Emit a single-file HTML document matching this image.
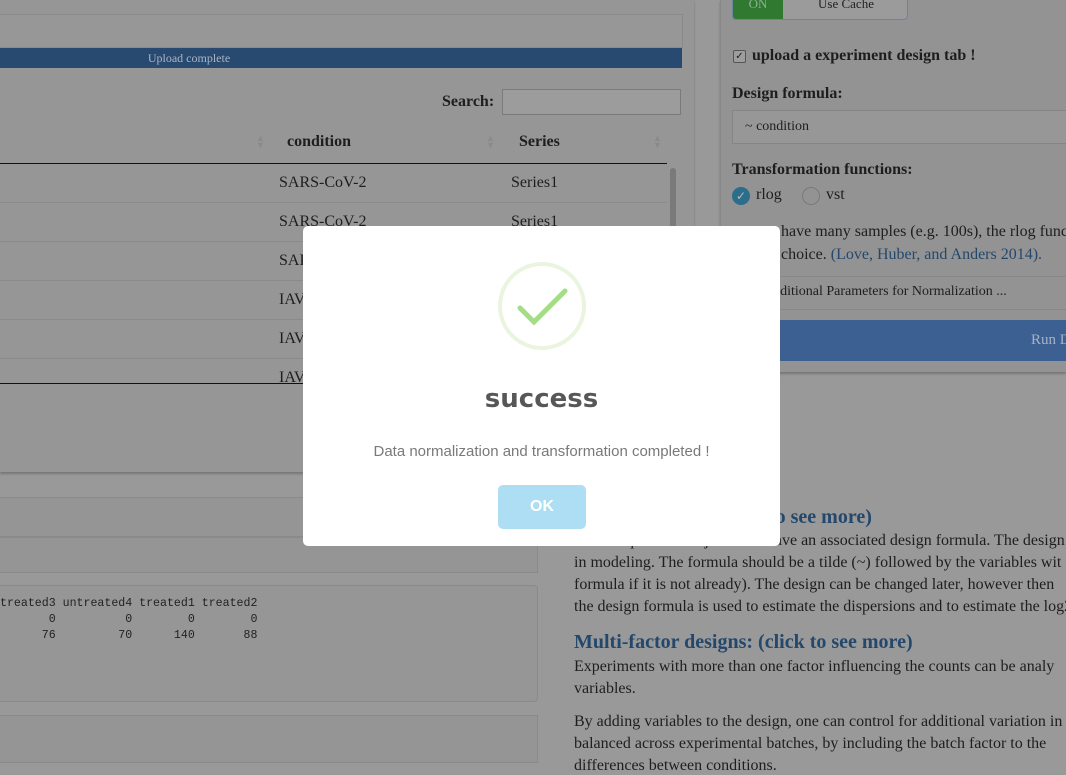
<!DOCTYPE html>
<html><head><meta charset="utf-8"><style>
*{margin:0;padding:0;box-sizing:border-box}
body{width:1066px;height:763px;overflow:hidden;background:#999;font-family:"Liberation Serif",serif;color:#1e1e1e;position:relative}
.a{position:absolute;white-space:nowrap}
.b{font-weight:bold}
.mono{font-family:"Liberation Mono",monospace;font-size:11.6px}
.link{color:#24486b}
</style></head><body>
<div class="a" style="left:0;top:0;width:694px;height:472px;background:#969696;box-shadow:0 2px 2px #777"></div>
<div class="a" style="left:0;top:14px;width:683px;height:34px;border:1px solid #8a8a8a;border-left:none;background:#979797"></div>
<div class="a" style="left:0;top:48px;width:682px;height:20px;background:#284a70;color:#a9b5c4;font-size:12px;text-align:center;line-height:20px;padding-right:304px">Upload complete</div>
<div class="a b" style="left:442px;top:93px;font-size:16px">Search:</div>
<div class="a" style="left:502px;top:89px;width:179px;height:26px;border:1px solid #7a7a7a;background:#9c9c9c"></div>
<div class="a b" style="left:287px;top:133px;font-size:16px">condition</div>
<div class="a b" style="left:519px;top:133px;font-size:16px">Series</div>
<div class="a" style="left:256px;top:135px;color:#8a8a8a;font-size:9px;line-height:7px">▲<br>▼</div>
<div class="a" style="left:486px;top:135px;color:#8a8a8a;font-size:9px;line-height:7px">▲<br>▼</div>
<div class="a" style="left:653px;top:135px;color:#8a8a8a;font-size:9px;line-height:7px">▲<br>▼</div>
<div class="a" style="left:0;top:163px;width:667px;height:1px;background:#111"></div>
<div class="a" style="left:0;top:202px;width:667px;height:1px;background:#8a8a8a"></div>
<div class="a" style="left:0;top:241px;width:667px;height:1px;background:#8a8a8a"></div>
<div class="a" style="left:0;top:280px;width:667px;height:1px;background:#8a8a8a"></div>
<div class="a" style="left:0;top:319px;width:667px;height:1px;background:#8a8a8a"></div>
<div class="a" style="left:0;top:358px;width:667px;height:1px;background:#8a8a8a"></div>
<div class="a" style="left:0;top:383px;width:667px;height:1px;background:#111"></div>
<div class="a" style="left:670px;top:168px;width:6px;height:70px;border-radius:3px;background:#7a7a7a"></div>
<div class="a" style="left:279px;top:174px;font-size:16px">SARS-CoV-2</div>
<div class="a" style="left:511px;top:174px;font-size:16px">Series1</div>
<div class="a" style="left:279px;top:213px;font-size:16px">SARS-CoV-2</div>
<div class="a" style="left:511px;top:213px;font-size:16px">Series1</div>
<div class="a" style="left:279px;top:252px;font-size:16px">SARS</div>
<div class="a" style="left:279px;top:291px;font-size:16px">IAV</div>
<div class="a" style="left:279px;top:330px;font-size:16px">IAV</div>
<div class="a" style="left:279px;top:369px;font-size:16px">IAV</div>
<div class="a" style="left:0;top:497px;width:538px;height:40px;border:1px solid #8a8a8a;border-left:none;background:#959595"></div>
<div class="a" style="left:0;top:537px;width:538px;height:36px;border:1px solid #8a8a8a;border-left:none;background:#959595"></div>
<div class="a" style="left:0;top:585px;width:538px;height:117px;border:1px solid #8a8a8a;border-left:none;border-radius:0 4px 4px 0;background:#969696"></div>
<div class="a mono" style="left:0;top:597px;color:#222">treated3 untreated4 treated1 treated2</div>
<div class="a mono" style="left:0;top:613px;color:#222;white-space:pre">       0          0        0        0</div>
<div class="a mono" style="left:0;top:629px;color:#222;white-space:pre">      76         70      140       88</div>
<div class="a" style="left:0;top:715px;width:538px;height:48px;border:1px solid #8a8a8a;border-left:none;background:#959595"></div>
<div class="a" style="left:720px;top:0;width:346px;height:372px;background:#939393;border-left:1px solid #888;box-shadow:0 2px 2px #777"></div>
<div class="a" style="left:732px;top:-4px;width:176px;height:24px;border:1px solid #6a84a4;border-radius:4px;background:#9b9b9b;overflow:hidden">
<div class="a" style="left:0;top:0;width:50px;height:24px;background:#2f7a30;color:#8fb08f;font-size:13px;text-align:center;line-height:14px">ON</div>
<div class="a" style="left:50px;top:0;width:126px;color:#222;font-size:13px;text-align:center;line-height:14px">Use Cache</div></div>
<div class="a" style="left:733px;top:50px;width:13px;height:13px;border:1px solid #555;border-radius:2px;background:#9d9d9d;font-size:10px;line-height:11px;text-align:center">✓</div>
<div class="a b" style="left:752px;top:47px;font-size:16px">upload a experiment design tab !</div>
<div class="a b" style="left:732px;top:85px;font-size:16px">Design formula:</div>
<div class="a" style="left:732px;top:110px;width:340px;height:34px;border:1px solid #858585;background:#979797;font-size:14px;line-height:32px;padding-left:12px">~ condition</div>
<div class="a b" style="left:732px;top:161px;font-size:16px">Transformation functions:</div>
<div class="a" style="left:732px;top:187px;width:18px;height:18px;border-radius:50%;background:#2b6e8c;color:#bbb;font-size:12px;text-align:center;line-height:18px">✓</div>
<div class="a" style="left:756px;top:186px;font-size:16px">rlog</div>
<div class="a" style="left:802px;top:187px;width:18px;height:18px;border-radius:50%;border:1px solid #7a7a7a"></div>
<div class="a" style="left:826px;top:186px;font-size:16px">vst</div>
<div class="a" style="left:781px;top:223px;font-size:16px">have many samples (e.g. 100s), the rlog func</div>
<div class="a" style="left:781px;top:246px;font-size:16px">choice. <span class="link">(Love, Huber, and Anders 2014).</span></div>
<div class="a" style="left:760px;top:276px;width:306px;height:1px;background:#888"></div>
<div class="a" style="left:763px;top:284px;font-size:14px">Additional Parameters for Normalization ...</div>
<div class="a" style="left:760px;top:309px;width:306px;height:1px;background:#888"></div>
<div class="a" style="left:760px;top:320px;width:306px;height:41px;background:#3d6093;color:#a6b2c4;font-size:15px;line-height:41px;padding-left:271px">Run D</div>
<div class="a b link" style="left:574px;top:506px;font-size:20px">Design formula: (click to see more)</div>
<div class="a" style="left:574px;top:532px;font-size:16px">A DESeqDataSet object must have an associated design formula. The design</div>
<div class="a" style="left:574px;top:554px;font-size:16px">in modeling. The formula should be a tilde (~) followed by the variables wit</div>
<div class="a" style="left:574px;top:576px;font-size:16px">formula if it is not already). The design can be changed later, however then</div>
<div class="a" style="left:574px;top:598px;font-size:16px">the design formula is used to estimate the dispersions and to estimate the log2</div>
<div class="a b link" style="left:574px;top:631px;font-size:20px">Multi-factor designs: (click to see more)</div>
<div class="a" style="left:574px;top:658px;font-size:16px">Experiments with more than one factor influencing the counts can be analy</div>
<div class="a" style="left:574px;top:680px;font-size:16px">variables.</div>
<div class="a" style="left:574px;top:713px;font-size:16px">By adding variables to the design, one can control for additional variation in</div>
<div class="a" style="left:574px;top:735px;font-size:16px">balanced across experimental batches, by including the batch factor to the</div>
<div class="a" style="left:574px;top:757px;font-size:16px">differences between conditions.</div>
<div class="a" style="left:303px;top:226px;width:477px;height:320px;background:#fff;border-radius:5px"></div>
<svg class="a" style="left:497px;top:261px" width="90" height="90" viewBox="0 0 90 90">
<circle cx="45" cy="45" r="42" fill="none" stroke="#eaf5e0" stroke-width="4"/>
<path d="M23 47 L37 61 L68 30" fill="none" stroke="#a5dc86" stroke-width="5" stroke-linecap="round"/>
</svg>
<div class="a b" style="left:303px;top:384px;width:477px;text-align:center;font-family:'DejaVu Sans','Liberation Sans',sans-serif;font-size:26px;color:#575757">success</div>
<div class="a" style="left:303px;top:443px;width:477px;text-align:center;font-family:'Liberation Sans',sans-serif;font-size:15px;color:#797979">Data normalization and transformation completed !</div>
<div class="a b" style="left:498px;top:485px;width:88px;height:44px;border-radius:5px;background:#aedef4;color:#fff;font-family:'Liberation Sans',sans-serif;font-size:16px;text-align:center;line-height:44px">OK</div>
</body></html>
